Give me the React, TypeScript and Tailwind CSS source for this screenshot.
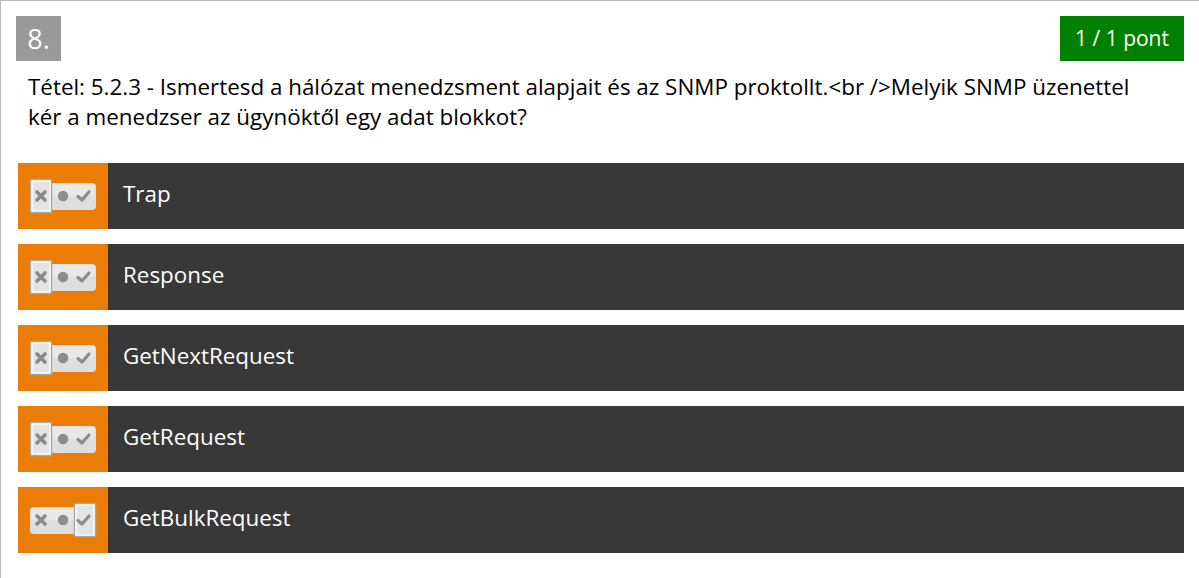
import React from "react";

function Toggle({ sel }: { sel: "x" | "check" }) {
  const boxX = sel === "x" ? 1 : 45;
  return (
    <svg width="68" height="36" viewBox="0 0 68 36">
      <defs>
        <filter id="blur1" x="-10%" y="-10%" width="120%" height="120%">
          <feGaussianBlur stdDeviation="0.7" />
        </filter>
      </defs>
      <rect x="1" y="5" width="66" height="27" rx="4" fill="#dedede" filter="url(#blur1)" />
      <rect x="2" y="6" width="64" height="12" rx="3" fill="#e8e8e8" filter="url(#blur1)" />
      <rect x={boxX + 0.5} y="1.5" width="21" height="33" fill="#e4e4e4" stroke="#a6a6a6" strokeWidth="1.5" />
      <rect x={boxX + 2} y="3" width="18" height="30" fill="none" stroke="#ffffff" strokeWidth="1.2" />
      <g filter="url(#blur1)">
        <path d="M8 14 L16 22 M16 14 L8 22" stroke="#8a8a8a" strokeWidth="3.6" strokeLinecap="round" />
        <circle cx="34" cy="18" r="5.2" fill="#8c8c8c" />
        <path d="M49 18.5 L53 22 L60 14" stroke="#8c8c8c" strokeWidth="3.2" fill="none" strokeLinecap="round" strokeLinejoin="round" />
      </g>
    </svg>
  );
}

const answers: { text: string; sel: "x" | "check" }[] = [
  { text: "Trap", sel: "x" },
  { text: "Response", sel: "x" },
  { text: "GetNextRequest", sel: "x" },
  { text: "GetRequest", sel: "x" },
  { text: "GetBulkRequest", sel: "check" },
];

export default function App() {
  return (
    <div
      className="w-[1199px] h-[578px] bg-white border-t border-l border-[#bbbbbb] pt-[15px] pl-[15px] pr-[15px] overflow-hidden"
      style={{ fontFamily: '"Open Sans", "Liberation Sans", sans-serif' }}
    >
      <div className="flex justify-between items-start">
        <div className="w-[45px] h-[45px] bg-[#999999] text-white text-[27px] flex items-center justify-center leading-none">
          8.
        </div>
        <div className="h-[45px] px-[15px] bg-[#008000] text-white text-[21px] flex items-center leading-none">
          1 / 1 pont
        </div>
      </div>
      <div className="pl-[12px] w-[1122px] mt-[11px] text-[22.4px] leading-[30px] text-black">
        Tétel: 5.2.3 - Ismertesd a hálózat menedzsment alapjait és az SNMP proktollt.&lt;br /&gt;Melyik SNMP üzenettel kér a menedzser az ügynöktől egy adat blokkot?
      </div>
      <div className="mt-[31px] ml-[2px] flex flex-col gap-[15px]">
        {answers.map((a) => (
          <div key={a.text} className="flex h-[66px]">
            <div className="w-[90px] bg-[#eb7d07] flex items-center justify-center">
              <Toggle sel={a.sel} />
            </div>
            <div className="flex-1 bg-[#383838] text-white text-[22.4px] flex items-center pl-[15px] pb-[4px]">
              {a.text}
            </div>
          </div>
        ))}
      </div>
    </div>
  );
}
